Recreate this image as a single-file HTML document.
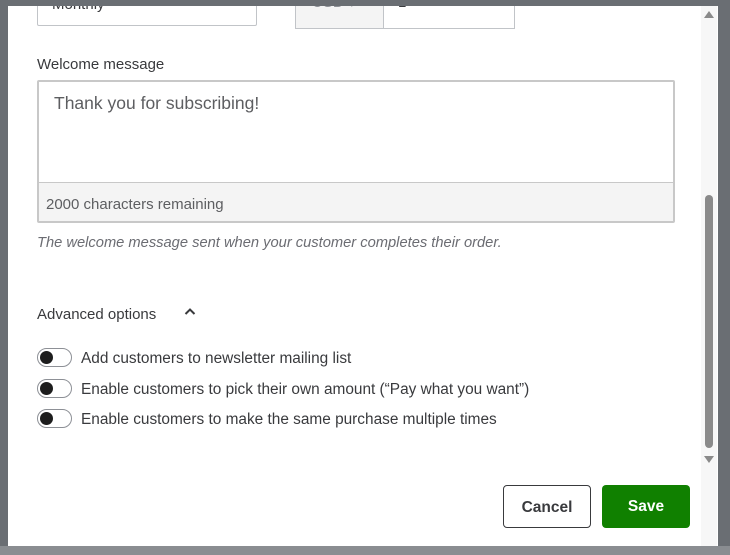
<!DOCTYPE html>
<html><head><meta charset="utf-8"><style>
*{box-sizing:border-box;margin:0;padding:0}
body{width:730px;height:555px;background:#6a6e73;position:relative;overflow:hidden;font-family:"Liberation Sans",sans-serif;color:#393a3d}
.modal{position:absolute;left:8px;top:6px;width:710px;height:540px;background:#fff;overflow:hidden}
.bottom{position:absolute;left:0;top:546px;width:730px;height:9px;background:#8a8d91}
.abs{position:absolute}
.sel{left:29px;top:-13px;width:220px;height:33px;border:1px solid #c1c4c8;border-radius:2px;font-size:15px;color:#393a3d;padding:2px 14px}
.cur{left:287px;top:-13px;width:89px;height:36px;border:1px solid #c1c4c8;background:#f4f4f4}
.amt{left:375px;top:-13px;width:132px;height:36px;border:1px solid #c1c4c8}
h3{font-size:15px;font-weight:normal;color:#393a3d}
.ta{left:29px;top:74px;width:638px;height:143px;border:2px solid #c8c8c8;border-radius:2px;background:#f4f4f4}
.ta .in{position:absolute;left:0;top:0;right:0;height:101px;background:#fff;border-bottom:1px solid #c8c8c8;font-size:17.5px;color:#5d5e61;padding:11px 15px}
.ta .cnt{position:absolute;left:7px;top:114px;font-size:15px;color:#5d5e61}
.hint{left:29px;top:229px;font-size:14.7px;font-style:italic;color:#6b6c72}
.tg{position:absolute;left:29px;width:35px;height:19px;border:1px solid #8d9096;border-radius:10px}
.tg::after{content:"";position:absolute;left:2px;top:2px;width:13px;height:13px;border-radius:50%;background:#1d1d1d}
.lbl{position:absolute;left:73px;font-size:15.4px;color:#393a3d}
.btn{position:absolute;top:479px;height:43px;border-radius:4px;font-size:15.5px;font-weight:bold;text-align:center;line-height:43px}
.sb{left:693px;top:0;width:16px;height:541px;background:#f7f7f7}
.th{left:697px;top:189px;width:8px;height:253px;background:#8a8a8a;border-radius:4px}
</style></head><body>
<div class="modal">
<div class="abs sel">Monthly<span style="position:absolute;right:14px;top:0px;font-size:9px">▼</span></div>
<div class="abs cur"><span style="position:absolute;left:16px;top:0px;font-size:15px;color:#8d9096">USD <span style="font-size:8px">▼</span></span></div>
<div class="abs amt"><span style="position:absolute;left:14px;top:0px;font-size:15px">1</span></div>
<h3 class="abs" style="left:29px;top:50px">Welcome message</h3>
<div class="abs ta"><div class="in">Thank you for subscribing!</div><div class="cnt">2000 characters remaining</div></div>
<div class="abs hint">The welcome message sent when your customer completes their order.</div>
<h3 class="abs" style="left:29px;top:300px">Advanced options</h3>
<svg class="abs" style="left:176px;top:301px" width="12" height="9" viewBox="0 0 12 9"><path d="M1.5 7 L6 2.5 L10.5 7" fill="none" stroke="#393a3d" stroke-width="2"/></svg>
<div class="tg" style="top:342px"></div><div class="lbl" style="top:344px">Add customers to newsletter mailing list</div>
<div class="tg" style="top:373px"></div><div class="lbl" style="top:375px">Enable customers to pick their own amount (“Pay what you want”)</div>
<div class="tg" style="top:403px"></div><div class="lbl" style="top:405px">Enable customers to make the same purchase multiple times</div>
<div class="abs sb"></div>
<div class="abs th"></div>
<div class="abs" style="left:696px;top:5px;width:0;height:0;border-left:5px solid transparent;border-right:5px solid transparent;border-bottom:7px solid #8a8a8a"></div>
<div class="abs" style="left:696px;top:450px;width:0;height:0;border-left:5px solid transparent;border-right:5px solid transparent;border-top:7px solid #8a8a8a"></div>
<div class="btn" style="left:495px;width:88px;border:1px solid #393a3d;color:#393a3d;background:#fff;font-weight:600">Cancel</div>
<div class="btn" style="left:594px;width:88px;background:#108000;color:#fff">Save</div>
</div>
<div class="bottom"></div>
</body></html>
